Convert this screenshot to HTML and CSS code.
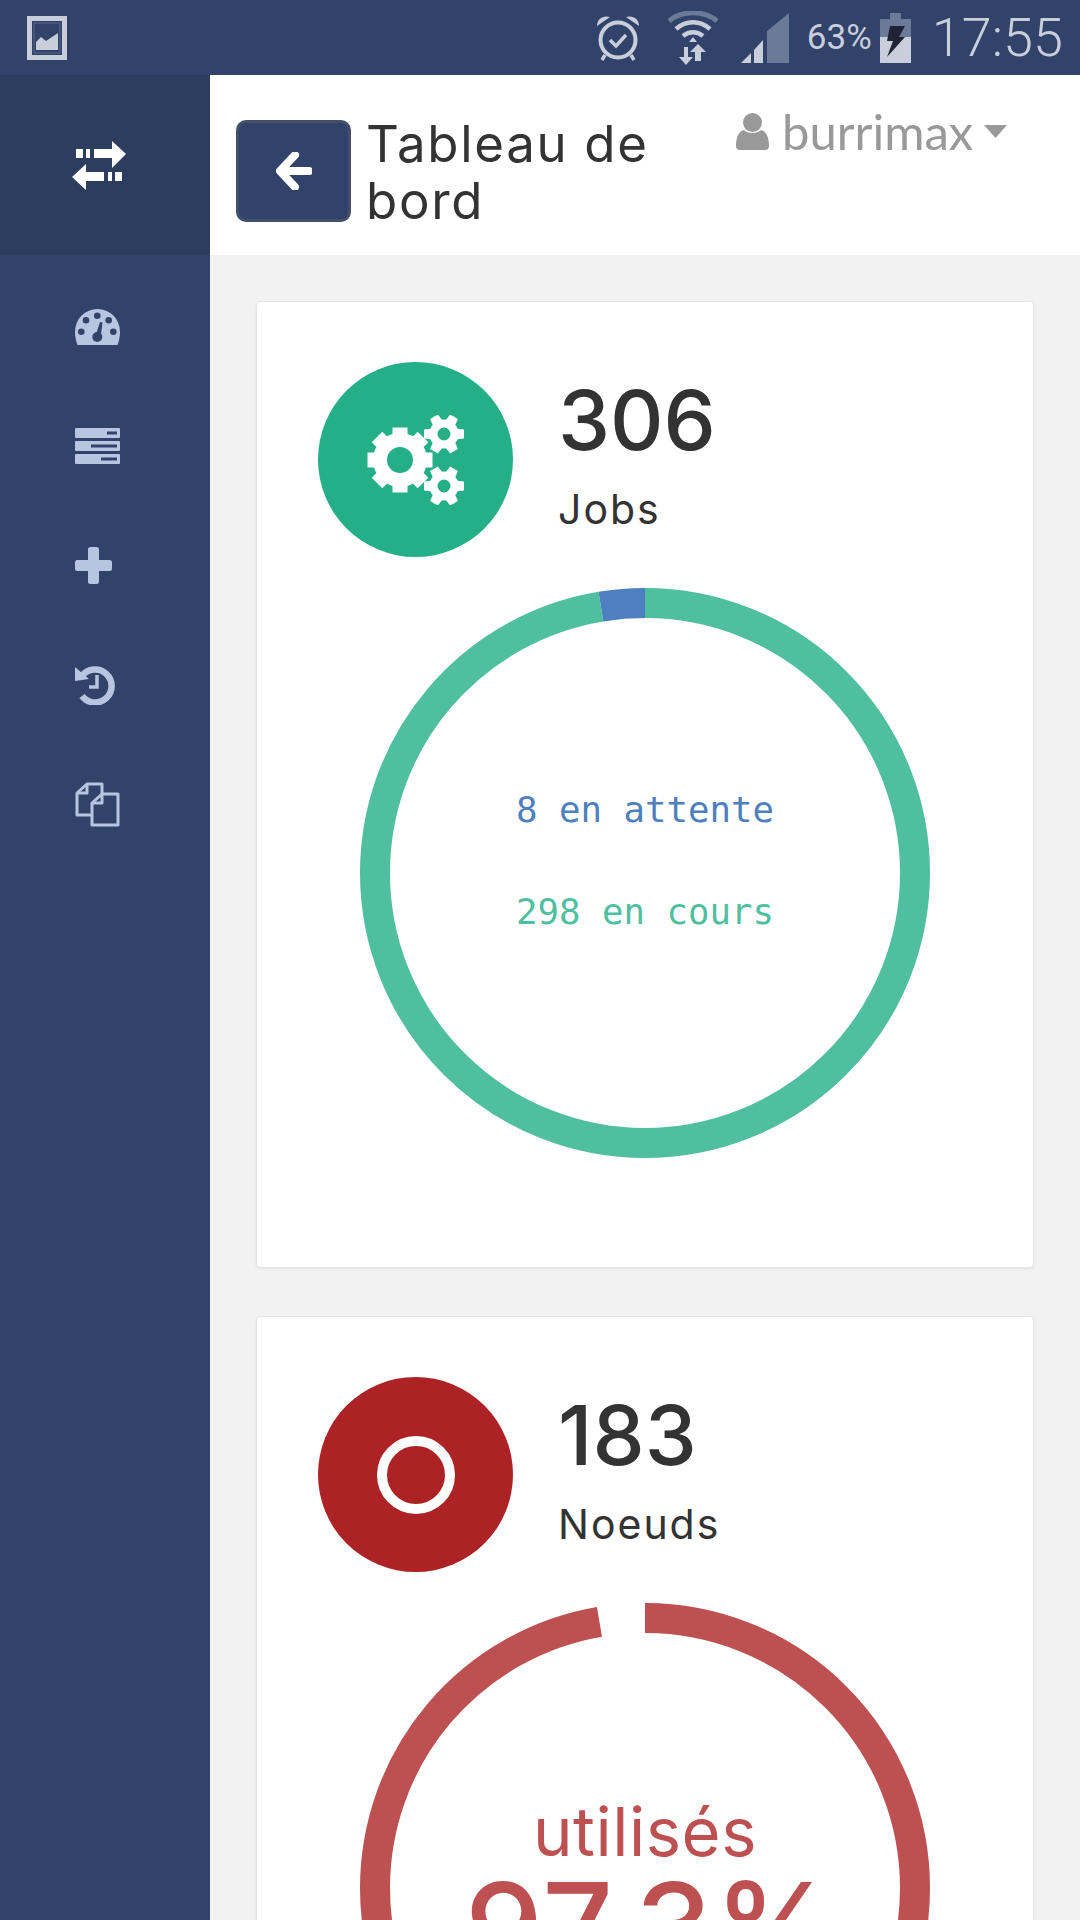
FILE: index.html
```html
<!DOCTYPE html>
<html lang="fr">
<head>
<meta charset="utf-8">
<title>Tableau de bord</title>
<link rel="stylesheet" href="styles.css">
</head>
<body>
<svg class="defs" width="0" height="0" aria-hidden="true">
  <defs>
    <g id="tooth-big"><rect x="-7.5" y="-32.5" width="15" height="14"/></g>
    <g id="gear-big">
      <circle r="20" fill="none" stroke="#fff" stroke-width="14"/>
      <use href="#tooth-big"/><use href="#tooth-big" transform="rotate(45)"/><use href="#tooth-big" transform="rotate(90)"/><use href="#tooth-big" transform="rotate(135)"/>
      <use href="#tooth-big" transform="rotate(180)"/><use href="#tooth-big" transform="rotate(225)"/><use href="#tooth-big" transform="rotate(270)"/><use href="#tooth-big" transform="rotate(315)"/>
    </g>
    <g id="tooth-small"><path d="M-4.5-20H4.5L5.500-11H-5.500Z"/></g>
    <g id="gear-small">
      <circle r="10.500" fill="none" stroke="#fff" stroke-width="8"/>
      <use href="#tooth-small" transform="rotate(30)"/><use href="#tooth-small" transform="rotate(90)"/><use href="#tooth-small" transform="rotate(150)"/>
      <use href="#tooth-small" transform="rotate(210)"/><use href="#tooth-small" transform="rotate(270)"/><use href="#tooth-small" transform="rotate(330)"/>
    </g>
  </defs>
</svg>
<div class="app">
  <div class="status">
    <svg class="st-image" width="40" height="44" viewBox="0 0 40 44"><rect x="2.500" y="2.500" width="35" height="39" fill="none" stroke="#c9cedb" stroke-width="5"/><rect x="7" y="7" width="26" height="30" fill="none" stroke="#5a6684" stroke-width="1"/><path d="M9 34V26L14 21L19 25L31 17V34Z" fill="#c9cedb"/></svg>
    <div class="status-right">
      <svg width="46" height="48" viewBox="0 0 46 48"><circle cx="23" cy="26" r="17.500" fill="none" stroke="#c9cedb" stroke-width="4"/><path d="M15 26L21 32L31 21" fill="none" stroke="#c9cedb" stroke-width="3.500"/><path d="M2 12C2 5 8 1 15 3ZM44 12C44 5 38 1 31 3Z" fill="#c9cedb"/><path d="M10 41L7 46M36 41L39 46" stroke="#c9cedb" stroke-width="3.500"/></svg>
      <svg width="50" height="54" viewBox="0 0 50 54"><path d="M1 10C14-1 36-1 49 10" fill="none" stroke="#6b7a98" stroke-width="5"/><path d="M8 18C18 9 32 9 42 18" fill="none" stroke="#c9cedb" stroke-width="4.500"/><path d="M15 25C21 20 29 20 35 25" fill="none" stroke="#c9cedb" stroke-width="4.500"/><path d="M21 31L25 26L29 31Z" fill="#c9cedb"/><path d="M16 36V46H11L18 54L25 46H20V36ZM27 50V41H22L30 33L38 41H33V50Z" fill="#c9cedb"/></svg>
      <svg width="48" height="50" viewBox="0 0 48 50"><path d="M48 0V50H26V18Z" fill="#6b7a98"/><path d="M0 50L10 40V50ZM13 50V37L22 27V50Z" fill="#c9cedb"/></svg>
      <span class="st-pct">63%</span>
      <svg width="31" height="50" viewBox="0 0 31 50"><path d="M10 0H21V6H31V24H0V6H10Z" fill="#6b7a98"/><path d="M0 24H31V50H0Z" fill="#c9cedb"/><path d="M10 13H25L19 24H25L7 44L13 28H7Z" fill="#1e2433"/></svg>
      <span class="st-time">17:55</span>
    </div>
  </div>
  <div class="layout">
    <aside class="sidebar">
      <div class="brand">
        <svg width="54" height="50" viewBox="0 0 54 50"><path d="M4 9H11V18H4ZM14 9H18V18H14ZM22 9H40V1L54 14L40 28V18H22Z" fill="#fff"/><path d="M50 32H43V41H50ZM40 32H36V41H40ZM32 32H14V24L0 37L14 50V41H32Z" fill="#fff"/></svg>
      </div>
      <nav class="nav">
        <div class="nav-item"><svg width="45" height="36" viewBox="0 0 45 36"><path d="M2.500 36C0.800 32 0 27 0 22.500A22.500 22.500 0 0 1 45 22.500C45 27 44.200 32 42.500 36Z" fill="#b7c5e0"/><g fill="#31426b"><circle cx="22.300" cy="6.700" r="3.300"/><circle cx="11" cy="11.300" r="3.300"/><circle cx="33.700" cy="11.300" r="3.300"/><circle cx="6.300" cy="22.700" r="3.300"/><circle cx="38.300" cy="22.700" r="3.300"/><circle cx="22.300" cy="28" r="5"/><path d="M20.500 27L25 13L27.500 13.500L25.500 29Z"/></g></svg></div>
        <div class="nav-item"><svg width="45" height="36" viewBox="0 0 45 36"><g fill="#b7c5e0"><rect y="0" width="45" height="10" rx="1"/><rect y="13" width="45" height="10" rx="1"/><rect y="26" width="45" height="10" rx="1"/></g><g fill="#31426b"><rect x="32" y="3.500" width="10" height="3"/><rect x="16" y="16.500" width="26" height="3"/><rect x="26" y="29.500" width="16" height="3"/></g></svg></div>
        <div class="nav-item"><svg width="37" height="37" viewBox="0 0 37 37"><path d="M13 2.500A2.500 2.500 0 0 1 15.500 0H21.500A2.500 2.500 0 0 1 24 2.500V13H34.500A2.500 2.500 0 0 1 37 15.500V21.500A2.500 2.500 0 0 1 34.500 24H24V34.500A2.500 2.500 0 0 1 21.500 37H15.500A2.500 2.500 0 0 1 13 34.500V24H2.500A2.500 2.500 0 0 1 0 21.500V15.500A2.500 2.500 0 0 1 2.500 13H13Z" fill="#b7c5e0"/></svg></div>
        <div class="nav-item"><svg width="40" height="40" viewBox="0 0 40 40"><path d="M7 11A16.500 16.500 0 1 1 7 31" fill="none" stroke="#b7c5e0" stroke-width="6.500"/><path d="M0 2L14 14L0 16Z" fill="#b7c5e0"/><path d="M22 10V22H14" fill="none" stroke="#b7c5e0" stroke-width="3.500"/></svg></div>
        <div class="nav-item"><svg width="45" height="45" viewBox="0 0 45 45"><g fill="none" stroke="#b7c5e0" stroke-width="3" stroke-linejoin="round"><path d="M17 33H2V11L12 2H27V12"/><path d="M12 2V11H2"/><path d="M17 21L27 12H43V43H17Z"/><path d="M27 12V21H17"/></g></svg></div>
      </nav>
    </aside>
    <main class="main">
      <header class="topbar">
        <button class="back" type="button"><svg width="36" height="38" viewBox="0 0 36 38"><path d="M19 3L4 19L19 35M5 19H33" fill="none" stroke="#fff" stroke-width="8" stroke-linecap="round" stroke-linejoin="round"/></svg></button>
        <h1 class="title">Tableau de bord</h1>
        <div class="user">
          <svg width="33" height="37" viewBox="0 0 33 37"><circle cx="16.500" cy="9.500" r="9.500" fill="#999"/><path d="M0 33C0 24 3 18 8 17C12 21 21 21 25 17C30 18 33 24 33 33Q33 37 29 37H4Q0 37 0 33Z" fill="#999"/></svg>
          <span class="user-name">burrimax</span>
          <svg width="25" height="14" viewBox="0 0 25 14"><path d="M1 1H24L12.500 14Z" fill="#999"/></svg>
        </div>
      </header>
      <div class="content">
        <section class="card">
          <div class="card-head">
            <div class="badge badge-green">
              <svg width="100" height="90" viewBox="0 0 100 90"><g fill="#fff"><use href="#gear-big" transform="translate(34 45)"/><use href="#gear-small" transform="translate(78 19)"/><use href="#gear-small" transform="translate(78 71)"/></g></svg>
            </div>
            <div class="stat">
              <div class="stat-num">306</div>
              <div class="stat-label">Jobs</div>
            </div>
          </div>
          <div class="chart">
            <svg class="ring" width="570" height="570" viewBox="0 0 570 570"><circle class="ring-green" cx="285" cy="285" r="270" pathLength="306" stroke-dasharray="298 8" transform="rotate(-90 285 285)"/><circle class="ring-blue" cx="285" cy="285" r="270" pathLength="306" stroke-dasharray="8 298" stroke-dashoffset="8" transform="rotate(-90 285 285)"/></svg>
            <div class="chart-center chart-jobs">
              <div class="mono mono-blue">8 en attente</div>
              <div class="mono mono-green">298 en cours</div>
            </div>
          </div>
        </section>
        <section class="card">
          <div class="card-head">
            <div class="badge badge-red"><span class="target"></span></div>
            <div class="stat">
              <div class="stat-num">183</div>
              <div class="stat-label">Noeuds</div>
            </div>
          </div>
          <div class="chart">
            <svg class="ring" width="570" height="570" viewBox="0 0 570 570"><circle class="ring-red" cx="285" cy="285" r="270" pathLength="1000" stroke-dasharray="973 27" transform="rotate(-90 285 285)"/></svg>
            <div class="chart-center chart-nodes">
              <div class="used">utilisés</div>
              <div class="used-num">97.3%</div>
            </div>
          </div>
        </section>
      </div>
    </main>
  </div>
</div>
</body>
</html>
```
FILE: styles.css
```css
* { box-sizing: border-box; }
html, body { margin: 0; padding: 0; }
body { width: 1080px; height: 1920px; overflow: hidden; background: #f2f2f2; font-family: Inter, "Liberation Sans", sans-serif; }
.defs { position: absolute; }
.app { width: 1080px; height: 1920px; display: flex; flex-direction: column; overflow: hidden; }
.status { flex: 0 0 75px; height: 75px; background: #31426b; display: flex; align-items: center; justify-content: space-between; padding: 0 17px 0 27px; }
.status-right { display: flex; align-items: center; }
.status-right svg:nth-of-type(1) { margin-right: 27px; }
.status-right svg:nth-of-type(2) { margin-right: 23px; }
.status-right svg:nth-of-type(3) { margin-right: 18px; }
.st-pct { font: 400 35px Roboto, sans-serif; color: #c9cedb; margin-right: 8px; }
.st-time { font: 300 54px Roboto, sans-serif; color: #c9cedb; margin-left: 21px; }
.layout { flex: 1; display: flex; min-height: 0; }
.sidebar { flex: 0 0 210px; background: #31426b; display: flex; flex-direction: column; }
.brand { flex: none; height: 180px; background: #2d3d60; display: flex; align-items: center; padding-left: 72px; }
.nav { display: flex; flex-direction: column; padding-top: 12px; }
.nav-item { height: 119.5px; display: flex; align-items: center; padding-left: 75px; }
.main { flex: 1; display: flex; flex-direction: column; min-width: 0; }
.topbar { flex: none; height: 180px; background: #fff; display: flex; align-items: flex-start; padding: 45px 0 0 26px; }
.back { width: 115px; height: 102px; background: #31426b; border: 3px solid #434f6b; border-radius: 10px; display: flex; align-items: center; justify-content: center; padding: 0; flex: none; }
.title { width: 340px; flex: none; margin: -5px 0 0 15px; font-size: 51px; line-height: 57px; font-weight: 400; color: #333; letter-spacing: 1.700px; }
.user { display: flex; align-items: center; margin: -18px 0 0 30px; color: #999; }
.user-name { font: 400 49px Lato, sans-serif; margin: 0 10px 0 13px; }
.content { padding: 46px 46px 0; display: flex; flex-direction: column; gap: 48px; }
.card { height: 967px; background: #fff; border: 1px solid #e6e6e6; border-radius: 4px; box-shadow: 0 1px 3px rgba(0,0,0,.06); padding: 60px 61px 0; flex: none; }
.card-head { display: flex; align-items: flex-start; gap: 45px; }
.badge { width: 195px; height: 195px; border-radius: 50%; display: flex; align-items: center; justify-content: center; flex: none; }
.badge-green { background: #25af88; }
.badge-red { background: #ad2224; }
.target { width: 78px; height: 78px; border: 10px solid #fff; border-radius: 50%; }
.stat { padding-top: 13px; }
.stat-num { font-size: 83px; line-height: 90px; font-weight: 500; color: #333; }
.stat-label { font-size: 41px; line-height: 46px; margin-top: 21px; color: #333; letter-spacing: 2px; }
.chart { display: grid; width: 570px; height: 570px; margin: 31px auto 0; }
.ring { grid-area: 1 / 1; display: block; fill: none; stroke-width: 30; }
.ring-green { stroke: #50bf9f; }
.ring-blue { stroke: #4e80bf; }
.ring-red { stroke: #bd5050; }
.chart-center { grid-area: 1 / 1; display: flex; flex-direction: column; align-items: center; justify-content: center; }
.chart-jobs { gap: 60px; padding-bottom: 24px; }
.mono { font: 400 35.700px/42px "DejaVu Sans Mono", monospace; }
.mono-blue { color: #4e80bf; }
.mono-green { color: #50bf9f; }
.chart-nodes { padding-top: 18px; color: #bd5050; }
.used { font-size: 67px; line-height: 60px; letter-spacing: 0.500px; }
.used-num { font-size: 124px; line-height: 130px; font-weight: 500; letter-spacing: 1.500px; margin-left: 14px; }
```
